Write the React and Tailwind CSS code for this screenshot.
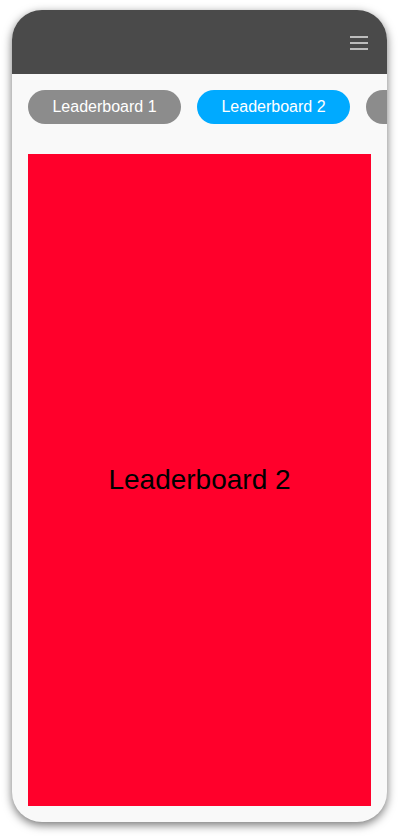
import React, { useState } from "react";

const tabs = ["Leaderboard 1", "Leaderboard 2", "Leaderboard 3"];

export default function App() {
  const [active, setActive] = useState(1);

  return (
    <div
      className="w-[399px] h-[836px] bg-white pt-[10px] pl-[12px]"
      style={{ fontFamily: '"Liberation Sans", Arial, sans-serif' }}
    >
      <div className="w-[375px] h-[812px] rounded-[30px] overflow-hidden bg-[#f9f9f9] flex flex-col shadow-[0_3px_10px_rgba(0,0,0,0.55)]">
        <header className="h-[64px] shrink-0 bg-[#4a4a4a] flex items-center justify-end pr-[19px]">
          <button className="flex flex-col gap-[4px] pt-[1px]">
            <span className="block w-[18px] h-[2px] bg-[#bdbdbd]" />
            <span className="block w-[18px] h-[2px] bg-[#bdbdbd]" />
            <span className="block w-[18px] h-[2px] bg-[#bdbdbd]" />
          </button>
        </header>

        <div className="flex gap-[16px] pl-[16px] pt-[16px] overflow-hidden shrink-0">
          {tabs.map((t, i) => (
            <button
              key={t}
              onClick={() => setActive(i)}
              className={`shrink-0 w-[153px] h-[34px] rounded-full text-[16px] text-white ${
                i === active ? "bg-[#00aaff]" : "bg-[#8c8c8c]"
              }`}
            >
              {t}
            </button>
          ))}
        </div>

        <main className="flex-1 px-[16px] pt-[30px] pb-[16px] flex">
          <div className="flex-1 bg-[#ff002b] flex items-center justify-center">
            <span className="text-[28px] text-black">{tabs[active]}</span>
          </div>
        </main>
      </div>
    </div>
  );
}
